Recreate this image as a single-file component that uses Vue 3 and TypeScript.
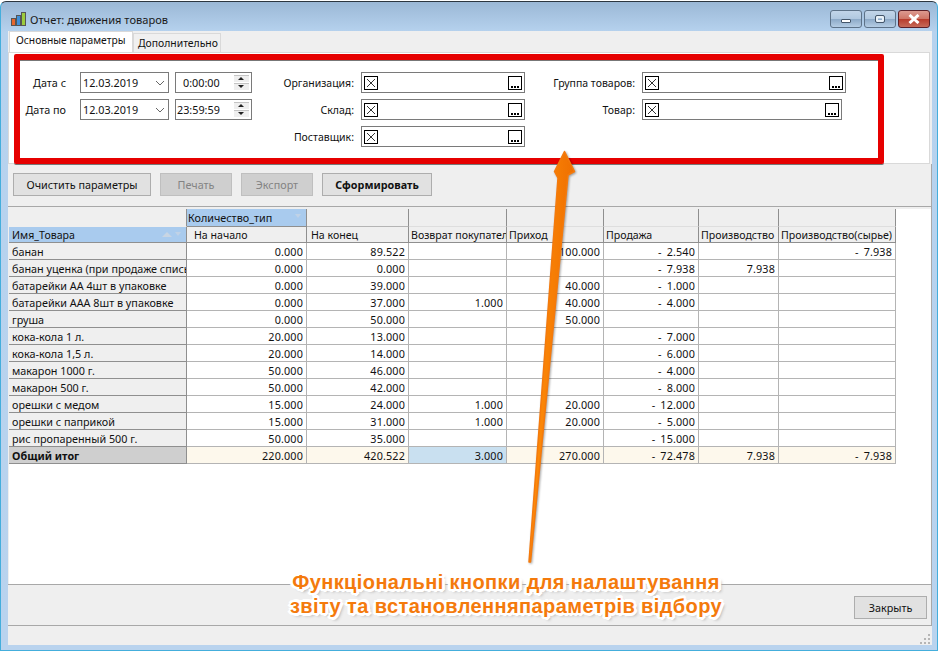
<script setup lang="ts">
interface Row {
  name: string
  vals: string[]
}

const columns = ['На начало', 'На конец', 'Возврат покупател', 'Приход', 'Продажа', 'Производство', 'Производство(сырье)']

const rows: Row[] = [
  { name: 'банан', vals: ['0.000', '89.522', '', '100.000', '- 2.540', '', '- 7.938'] },
  { name: 'банан уценка (при продаже списы', vals: ['0.000', '0.000', '', '', '- 7.938', '7.938', ''] },
  { name: 'батарейки АА 4шт в упаковке', vals: ['0.000', '39.000', '', '40.000', '- 1.000', '', ''] },
  { name: 'батарейки ААА 8шт в упаковке', vals: ['0.000', '37.000', '1.000', '40.000', '- 4.000', '', ''] },
  { name: 'груша', vals: ['0.000', '50.000', '', '50.000', '', '', ''] },
  { name: 'кока-кола 1 л.', vals: ['20.000', '13.000', '', '', '- 7.000', '', ''] },
  { name: 'кока-кола 1,5 л.', vals: ['20.000', '14.000', '', '', '- 6.000', '', ''] },
  { name: 'макарон 1000 г.', vals: ['50.000', '46.000', '', '', '- 4.000', '', ''] },
  { name: 'макарон 500 г.', vals: ['50.000', '42.000', '', '', '- 8.000', '', ''] },
  { name: 'орешки с медом', vals: ['15.000', '24.000', '1.000', '20.000', '- 12.000', '', ''] },
  { name: 'орешки с паприкой', vals: ['15.000', '31.000', '1.000', '20.000', '- 5.000', '', ''] },
  { name: 'рис пропаренный 500 г.', vals: ['50.000', '35.000', '', '', '- 15.000', '', ''] }
]

const totals = ['220.000', '420.522', '3.000', '270.000', '- 72.478', '7.938', '- 7.938']
const colWidths = [178, 120, 102, 98, 97, 95, 80, 117]
</script>

<template>
  <div class="win">
    <div class="titlebar">
      <svg class="appicon" width="16" height="16" viewBox="0 0 16 16">
        <rect x="0.5" y="7.5" width="4" height="7" fill="#e8672c" stroke="#555" />
        <rect x="5.5" y="4.5" width="4" height="10" fill="#3f8fd8" stroke="#555" />
        <rect x="10.5" y="1.5" width="4" height="13" fill="#9ccb3c" stroke="#555" />
      </svg>
      <span class="wintitle">Отчет: движения товаров</span>
      <div class="capbtns">
        <div class="capbtn"><span class="glyph-min"></span></div>
        <div class="capbtn"><span class="glyph-max"></span></div>
        <div class="capbtn close">
          <svg width="12" height="10" viewBox="0 0 12 10">
            <path d="M1.5 1 L10.5 9 M10.5 1 L1.5 9" stroke="#fff" stroke-width="3" />
          </svg>
        </div>
      </div>
    </div>

    <div class="body">
      <div class="tabs">
        <div class="tab active">Основные параметры</div>
        <div class="tab">Дополнительно</div>
      </div>

      <div class="params">
        <div class="dates">
          <div class="date-row">
            <label class="date-label">Дата с</label>
            <div class="field date"><span>12.03.2019</span>
              <svg width="10" height="6" viewBox="0 0 10 6"><path d="M1 1 L5 5 L9 1" fill="none" stroke="#666" /></svg>
            </div>
            <div class="field time"><span class="center">0:00:00</span>
              <div class="spin"><i class="up"></i><i class="down"></i></div>
            </div>
          </div>
          <div class="date-row">
            <label class="date-label">Дата по</label>
            <div class="field date"><span>12.03.2019</span>
              <svg width="10" height="6" viewBox="0 0 10 6"><path d="M1 1 L5 5 L9 1" fill="none" stroke="#666" /></svg>
            </div>
            <div class="field time"><span>23:59:59</span>
              <div class="spin"><i class="up"></i><i class="down"></i></div>
            </div>
          </div>
        </div>

        <div class="lookups mid">
          <div v-for="l in ['Организация:', 'Склад:', 'Поставщик:']" :key="l" class="lookup-row">
            <label>{{ l }}</label>
            <div class="lookup">
              <svg class="xbox" width="14" height="14" viewBox="0 0 14 14"><rect x="0.5" y="0.5" width="13" height="13" fill="#fff" stroke="#000" /><path d="M3 3 L11 11 M11 3 L3 11" stroke="#000" stroke-width="0.8" /></svg>
              <svg class="dots" width="14" height="14" viewBox="0 0 14 14"><rect x="0.5" y="0.5" width="13" height="13" fill="#fff" stroke="#000" /><path d="M3 10h2v2h-2z M6 10h2v2h-2z M9 10h2v2h-2z" fill="#000" /></svg>
            </div>
          </div>
        </div>

        <div class="lookups right">
          <div class="lookup-row">
            <label>Группа товаров:</label>
            <div class="lookup wide">
              <svg class="xbox" width="14" height="14" viewBox="0 0 14 14"><rect x="0.5" y="0.5" width="13" height="13" fill="#fff" stroke="#000" /><path d="M3 3 L11 11 M11 3 L3 11" stroke="#000" stroke-width="0.8" /></svg>
              <svg class="dots" width="14" height="14" viewBox="0 0 14 14"><rect x="0.5" y="0.5" width="13" height="13" fill="#fff" stroke="#000" /><path d="M3 10h2v2h-2z M6 10h2v2h-2z M9 10h2v2h-2z" fill="#000" /></svg>
            </div>
          </div>
          <div class="lookup-row">
            <label>Товар:</label>
            <div class="lookup wider">
              <svg class="xbox" width="14" height="14" viewBox="0 0 14 14"><rect x="0.5" y="0.5" width="13" height="13" fill="#fff" stroke="#000" /><path d="M3 3 L11 11 M11 3 L3 11" stroke="#000" stroke-width="0.8" /></svg>
              <svg class="dots" width="14" height="14" viewBox="0 0 14 14"><rect x="0.5" y="0.5" width="13" height="13" fill="#fff" stroke="#000" /><path d="M3 10h2v2h-2z M6 10h2v2h-2z M9 10h2v2h-2z" fill="#000" /></svg>
            </div>
          </div>
        </div>
      </div>

      <div class="lower">
        <div class="toolbar">
          <button class="btn clear">Очистить параметры</button>
          <button class="btn off print">Печать</button>
          <button class="btn off export">Экспорт</button>
          <button class="btn build">Сформировать</button>
        </div>

        <div class="gridwrap">
          <table class="grid">
            <colgroup>
              <col v-for="(w, i) in colWidths" :key="i" :style="{ width: w + 'px' }" />
            </colgroup>
            <thead>
              <tr class="h1">
                <th class="blank first"></th>
                <th class="blue kol">Количество_тип<span class="filter"></span></th>
                <th class="blank" v-for="i in 6" :key="i" :class="{ dark: i === 1 }"></th>
              </tr>
              <tr class="h2">
                <th class="blue name">Имя_Товара<span class="sort"></span><span class="filter"></span></th>
                <th v-for="(c, i) in columns" :key="c" :class="{ pad: i === 0, pad2: i === 1 }"><span class="clip">{{ c }}</span></th>
              </tr>
            </thead>
            <tbody>
              <tr v-for="r in rows" :key="r.name">
                <td class="rowname"><span class="clip">{{ r.name }}</span></td>
                <td v-for="(v, i) in r.vals" :key="i" class="num">
                  <template v-if="v.startsWith('-')"><span class="minus">-</span>{{ v.slice(2) }}</template>
                  <template v-else>{{ v }}</template>
                </td>
              </tr>
              <tr class="total">
                <td class="rowname">Общий итог</td>
                <td v-for="(v, i) in totals" :key="i" class="num" :class="{ sel: i === 2 }">
                  <template v-if="v.startsWith('-')"><span class="minus">-</span>{{ v.slice(2) }}</template>
                  <template v-else>{{ v }}</template>
                </td>
              </tr>
            </tbody>
          </table>
        </div>

        <div class="footer">
          <button class="btn closebtn">Закрыть</button>
        </div>
      </div>
      <div class="status">
        <svg width="11" height="11" viewBox="0 0 11 11" fill="#b5b5b5">
          <path d="M8 0h2v2h-2z M4 4h2v2h-2z M8 4h2v2h-2z M0 8h2v2h-2z M4 8h2v2h-2z M8 8h2v2h-2z" />
        </svg>
      </div>
    </div>

    <!-- annotation drawn over the screenshot -->
    <div class="redbox"></div>
    <svg class="arrow" width="939" height="652" viewBox="0 0 939 652">
      <defs>
        <linearGradient id="arrowfill" x1="0" y1="0" x2="1" y2="0">
          <stop offset="0" stop-color="#ff8f0a" />
          <stop offset="1" stop-color="#ef6f00" />
        </linearGradient>
      </defs>
      <path
        class="arrowshape"
        d="M529 562 L558 178 L554.5 171.5 L564.5 151.5 L574.5 171.5 L568 175 L530.5 562 Z"
        fill="url(#arrowfill)"
        stroke="#f47a0c"
        stroke-width="1.5"
        stroke-linejoin="round"
      />
    </svg>
    <div class="caption">Функціональні кнопки для налаштування<br />звіту та встановленняпараметрів відбору</div>
  </div>
</template>

<style>
html,
body {
  margin: 0;
  background: #fff;
}
</style>

<style scoped>
.win {
  position: relative;
  width: 938px;
  height: 650px;
  margin-top: 1px;
  box-sizing: border-box;
  padding: 0 5px 5px 7px;
  display: flex;
  flex-direction: column;
  overflow: hidden;
  background: linear-gradient(#9bb8d6 0, #b6d2ee 30px, #b9d3ee 650px);
  border: 1px solid #44aedc;
  border-top-color: #2c3640;
  border-radius: 6px 6px 0 0;
  font-family: 'Noto Sans', 'Open Sans', sans-serif;
  font-size: 10.8px;
  color: #111;
}
.titlebar {
  height: 29px;
  flex: none;
  display: flex;
  align-items: flex-start;
  padding-left: 3px;
  box-sizing: border-box;
}
.appicon {
  margin-right: 3px;
  margin-top: 9px;
}
.wintitle {
  margin-top: 10px;
  font-size: 11.1px;
  line-height: 16px;
  color: #1a1a1a;
}
.capbtns {
  margin-left: auto;
  margin-top: 8px;
  display: flex;
  gap: 2px;
  padding-right: 2px;
}
.capbtn {
  width: 30px;
  height: 16px;
  border: 1px solid #5d7288;
  border-radius: 3px;
  background: linear-gradient(#c2d5e9 0, #b0c8e0 50%, #8daac8 52%, #b5cde4 100%);
  display: flex;
  align-items: center;
  justify-content: center;
}
.capbtn.close {
  background: linear-gradient(#dd9a90 0, #cf7667 48%, #b83c2c 52%, #c66a58 100%);
  border-color: #5b2028;
}
.glyph-min {
  width: 8px;
  height: 2px;
  margin-top: 3px;
  background: #fff;
  border: 1px solid #44566a;
  border-radius: 1px;
}
.glyph-max {
  width: 4px;
  height: 2px;
  background: transparent;
  border: 2px solid #e9f1f8;
  outline: 1px solid #44566a;
  border-radius: 1px;
}
.body {
  flex: 1;
  display: flex;
  flex-direction: column;
  background: #efefef;
  min-height: 0;
}
.tabs {
  height: 21px;
  display: flex;
  align-items: flex-end;
  padding-left: 1px;
  flex: none;
}
.tab {
  height: 19px;
  width: 88px;
  box-sizing: border-box;
  border: 1px solid #d9d9d9;
  border-bottom: none;
  padding: 2px 0 0 4px;
  background: #f0f0f0;
  font-size: 10.4px;
  line-height: 15px;
  white-space: nowrap;
}
.tab.active {
  height: 21px;
  width: 124px;
  background: #fff;
  font-size: 10.25px;
  padding: 1px 0 0 6px;
}
.params {
  height: 112px;
  flex: none;
  box-sizing: border-box;
  margin-right: 2px;
  background: #fff;
  border: 1px solid #d9d9d9;
  display: flex;
  padding-top: 19px;
}
.dates {
  width: 243px;
  flex: none;
  display: flex;
  flex-direction: column;
  gap: 6px;
}
.date-row {
  display: flex;
  align-items: center;
  height: 21px;
}
.date-label {
  width: 71px;
  padding-right: 14px;
  text-align: right;
  box-sizing: border-box;
}
.field {
  height: 21px;
  box-sizing: border-box;
  border: 1px solid #7a7a7a;
  display: flex;
  align-items: center;
  background: #fff;
}
.date {
  width: 89px;
  padding: 0 3px 0 2px;
  justify-content: space-between;
}
.time {
  width: 77px;
  margin-left: 6px;
  padding-left: 1px;
  justify-content: space-between;
}
.center {
  padding-left: 6px;
}
.spin {
  width: 15px;
  height: 15px;
  margin-right: 2px;
  display: flex;
  flex-direction: column;
  justify-content: space-between;
}
.spin i {
  height: 6px;
  display: block;
  position: relative;
  background: #efefef;
  border-top: 1px solid #c4c4c4;
}
.spin i::after {
  content: '';
  position: absolute;
  left: 4px;
  border-left: 3px solid transparent;
  border-right: 3px solid transparent;
}
.spin .up::after {
  top: 1px;
  border-bottom: 3px solid #222;
}
.spin .down::after {
  top: 1px;
  border-top: 3px solid #222;
}
.lookups {
  display: flex;
  flex-direction: column;
  gap: 6px;
}
.mid {
  width: 282px;
  flex: none;
}
.lookup-row {
  display: flex;
  align-items: center;
  height: 21px;
}
.lookup-row label {
  text-align: right;
  box-sizing: border-box;
  padding-right: 7px;
  white-space: nowrap;
  font-size: 10.5px;
}
.mid label {
  width: 109px;
}
.right label {
  width: 108px;
}
.lookup {
  height: 21px;
  width: 164px;
  box-sizing: border-box;
  border: 1px solid #7a7a7a;
  display: flex;
  align-items: center;
  justify-content: space-between;
  padding: 0 2px;
  background: #fff;
}
.lookup.wide {
  width: 204px;
}
.lookup.wider {
  width: 200px;
}
.lookup svg {
  display: block;
}
.lower {
  flex: 1;
  min-height: 0;
  display: flex;
  flex-direction: column;
  border-right: 1px solid #a8a8a8;
}
.toolbar {
  height: 43px;
  flex: none;
  box-sizing: border-box;
  padding: 9px 0 0 5px;
  display: flex;
  align-items: flex-start;
  gap: 9px;
  border-bottom: 1px solid #a8a8a8;
}
.btn {
  height: 23px;
  box-sizing: border-box;
  border: 1px solid #adadad;
  background: #e1e1e1;
  font: inherit;
  color: #111;
  padding: 0;
}
.clear {
  width: 138px;
}
.off {
  color: #838383;
  background: #cfcfcf;
  border-color: #bfbfbf;
}
.print,
.export {
  width: 72px;
}
.build {
  width: 110px;
  font-weight: 700;
}
.gridwrap {
  flex: 1;
  margin: 2px 0 0 1px;
  background: #fff;
  min-height: 0;
  overflow: hidden;
}
.grid {
  table-layout: fixed;
  border-collapse: separate;
  border-spacing: 0;
  width: 887px;
}
.grid th,
.grid td {
  box-sizing: border-box;
  padding: 0;
  overflow: hidden;
  white-space: nowrap;
  font-weight: 400;
  text-align: left;
  vertical-align: middle;
}
.grid th {
  background: #efefef;
  border-right: 1px solid #8f8f8f;
  border-bottom: 1px solid #8f8f8f;
}
.h1 th {
  height: 18px;
}
.h1 th.blank {
  border-bottom-color: #dedede;
}
.h1 th.first {
  border-bottom-color: #efefef;
}
.h1 th.dark {
  border-bottom-color: #b4b4b4;
}
.h2 th {
  height: 16px;
  padding-left: 2px;
  position: relative;
  font-size: 10.6px;
}
.grid th.pad {
  padding-left: 7px;
}
.grid th.pad2 {
  padding-left: 4px;
}
.grid th.blue {
  background: #a9cbee;
  position: relative;
}
.grid th.kol {
  padding-left: 1px;
}
.grid th.name {
  padding-left: 3px;
}
.filter {
  position: absolute;
  right: 5px;
  top: 5px;
  border-left: 3px solid transparent;
  border-right: 3px solid transparent;
  border-top: 4px solid #c0d2e6;
}
.sort {
  position: absolute;
  right: 14px;
  top: 5px;
  border-left: 5px solid transparent;
  border-right: 5px solid transparent;
  border-bottom: 5px solid #c8d5e3;
}
.clip {
  display: block;
  overflow: hidden;
}
.grid td {
  height: 17px;
  border-right: 1px solid #b4b4b4;
  border-bottom: 1px solid #b4b4b4;
  line-height: 15px;
}
.grid td.rowname {
  background: #efefef;
  padding-left: 3px;
  border-right-color: #8f8f8f;
  border-bottom-color: #8f8f8f;
}
.grid td.num {
  text-align: right;
  padding-right: 3px;
  letter-spacing: 0.15px;
}
.minus {
  margin-right: 5px;
}
.total td {
  background: #fdf8ec;
}
.grid .total .rowname {
  background: #cfcfcf;
  font-weight: 700;
}
.total .sel {
  background: #c9e0f0;
}
.footer {
  height: 42px;
  flex: none;
  box-sizing: border-box;
  border-top: 1px solid #a8a8a8;
  border-bottom: 1px solid #a8a8a8;
  display: flex;
  align-items: flex-start;
  justify-content: flex-end;
  padding: 11px 4px 0 0;
}
.closebtn {
  width: 73px;
}
.status {
  height: 19px;
  flex: none;
  display: flex;
  align-items: flex-end;
  justify-content: flex-end;
  padding: 0 1px 0 0;
}
.status svg {
  display: block;
}
.redbox {
  position: absolute;
  left: 13px;
  top: 52px;
  width: 870px;
  height: 110px;
  box-sizing: border-box;
  border: 6px solid #e60000;
  border-radius: 2px;
  box-shadow: inset 0 1px 0 #777, 0 1px 0 #777;
}
.arrow {
  position: absolute;
  left: -1px;
  top: -2px;
  pointer-events: none;
}
.arrowshape {
  filter: drop-shadow(1px 1px 1px rgba(0, 0, 0, 0.35));
}
.caption {
  position: absolute;
  left: 245px;
  width: 520px;
  top: 568px;
  text-align: center;
  font-family: 'Liberation Sans', sans-serif;
  font-weight: 700;
  font-size: 20px;
  line-height: 24px;
  color: #f47a0c;
  letter-spacing: 0.4px;
  text-shadow:
    2px 0 0 #fff, -2px 0 0 #fff, 0 2px 0 #fff, 0 -2px 0 #fff,
    2px 2px 0 #fff, -2px 2px 0 #fff, 2px -2px 0 #fff, -2px -2px 0 #fff,
    3px 1px 0 #fff, -3px 1px 0 #fff, 1px 3px 0 #fff, 1px -3px 0 #fff,
    3px 3px 3px #aaa;
}
</style>
